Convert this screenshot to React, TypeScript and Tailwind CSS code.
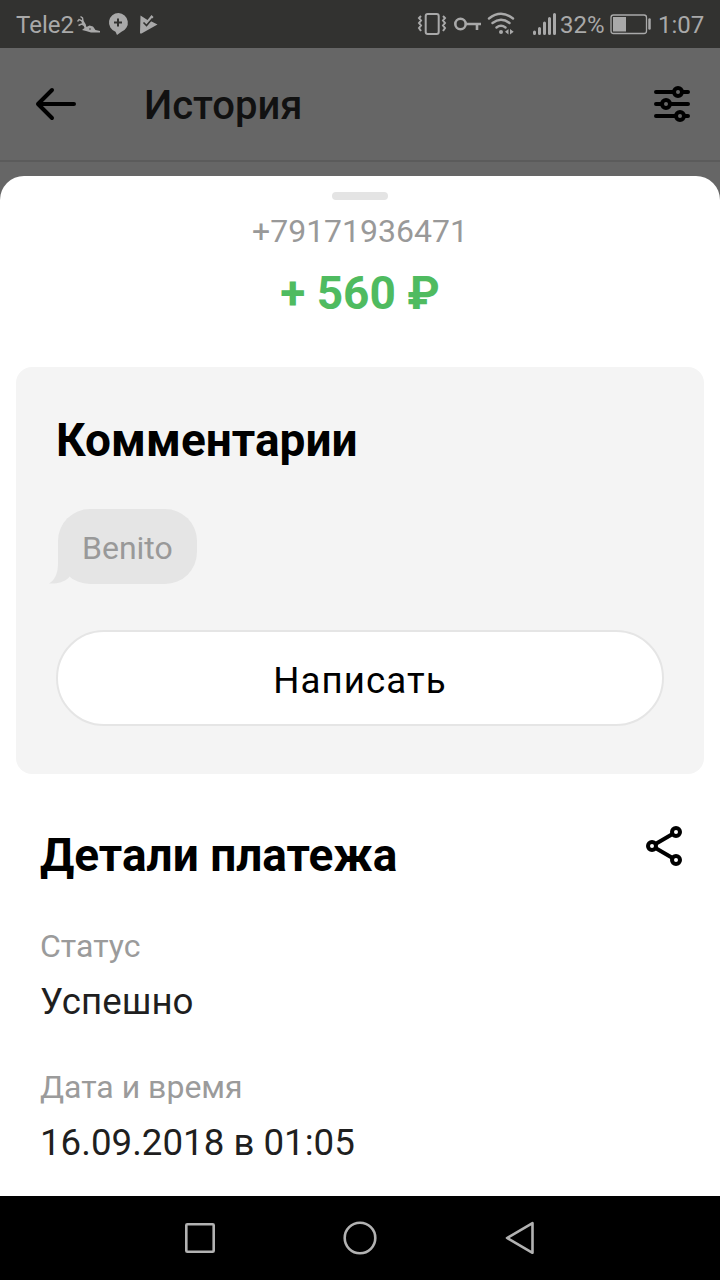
import type { ReactNode } from 'react';

const details = [
  { label: 'Статус', value: 'Успешно' },
  { label: 'Дата и время', value: '16.09.2018 в 01:05' },
];

function StatusBar() {
  return (
    <div className="flex h-12 items-center bg-[#323230] pl-4 text-2xl leading-none text-[#a9a9a9]">
      <span className="w-[61px] pt-0.5">Tele2</span>
      <svg width="84" height="48" viewBox="77 0 84 48" fill="currentColor">
        {/* carrier mascot */}
        <path
          d="M77.500 21.500l1.500-2 2.500 1 2 4M80.500 16.500l2 1.500.5 3 2 3.500M78.500 25.500l3-1.500 3.500 1.500"
          fill="none"
          stroke="currentColor"
          strokeWidth="1.400"
        />
        <path d="M82.500 23l3 1 1 3 3-1.500 3.500 1 2.500 3.500 4.500 1v1.500H91l-5-1.500-4-1 2.500-2z" />
        <circle cx="90" cy="29" r="0.800" fill="#323230" />
        <path d="M118.500 13a9.700 9.700 0 0 1 3 18.800L117 35l-1.500-3.300A9.600 9.600 0 0 1 118.500 13z" />
        <path d="M118 18.500v8M114 22.500h8" stroke="#323230" strokeWidth="2" />
        <path d="M140.500 15.500l7 4.500 4-5 2 2-3 4 7 3.500-16 9c-.8.4-1.500 0-1.500-1z" />
        <path d="M143.500 22.500l3 3 6-7" fill="none" stroke="#323230" strokeWidth="1.600" />
      </svg>
      <svg className="ml-auto" width="143" height="48" viewBox="417 0 143 48" fill="none" stroke="currentColor" strokeWidth="2">
        {/* vibrate */}
        <rect x="425.700" y="14" width="13" height="20" rx="2" />
        <path d="M421 16l-2 2 2 2.500-2 2.500 2 2.500-2 2.500 2 3M443 16l2 2-2 2.500 2 2.500-2 2.500 2 2.500-2 3" />
        {/* vpn key */}
        <circle cx="460.500" cy="24" r="5.200" strokeWidth="2.600" />
        <path d="M466 24h15M477 24v6" strokeWidth="2.600" />
        {/* wifi */}
        <path d="M489 18.500q12-9.500 24 0M492.500 23q8.500-6.500 17 0M496.500 27.500q4.500-3.500 9 0" strokeWidth="2.400" strokeLinecap="round" />
        <circle cx="501" cy="32" r="2" fill="currentColor" stroke="none" />
        <path d="M508.500 29v5.500l-3.500-2.700zM510 29v5.500l3.700-2.700z" fill="currentColor" stroke="none" />
        {/* signal */}
        <path
          d="M534.500 32v1.500M539.500 28.500v5M544.500 23v10.500M549.500 18.500v15M554.500 14.500v19"
          strokeWidth="3"
          strokeLinecap="round"
        />
      </svg>
      <span className="w-[50px] pt-0.5">32%</span>
      <svg width="48" height="48" viewBox="610 0 48 48" fill="none" stroke="currentColor">
        <rect x="611" y="15" width="35.500" height="18.500" rx="2.500" strokeWidth="1.300" />
        <path d="M613 17h13v14.500h-13z" fill="currentColor" stroke="none" />
        <path d="M649.500 19.500v9" strokeWidth="2.500" strokeLinecap="round" />
      </svg>
      <span className="w-[62px] pt-0.5">1:07</span>
    </div>
  );
}

function Header() {
  return (
    <header className="flex h-[114px] items-center border-b-2 border-[#5b5b5b] pr-7 pl-8">
      <svg width="48" height="48" viewBox="32 80 48 48" fill="none" stroke="#000" strokeWidth="4" strokeLinecap="round" strokeLinejoin="round">
        <path d="M74 104H38M52 90L38 104L52 118" />
      </svg>
      <h1 className="ml-16 pt-1 text-[40px] leading-[48px] font-medium text-[#111]">История</h1>
      <svg className="ml-auto" width="40" height="48" viewBox="652 80 40 48" fill="#666" stroke="#000" strokeWidth="4" strokeLinecap="round">
        <path d="M656 92h32M656 104h32M656 116h32" />
        <circle cx="678" cy="92" r="4" />
        <circle cx="666" cy="104" r="4" />
        <circle cx="680" cy="116" r="4" />
      </svg>
    </header>
  );
}

function Heading({ children }: { children: ReactNode }) {
  return <h2 className="text-[46px] leading-[56px] font-bold text-black">{children}</h2>;
}

function Comments() {
  return (
    <section className="mx-4 mt-[46px] h-[407px] rounded-2xl bg-[#f4f4f4] px-10 pt-[45px]">
      <Heading>Комментарии</Heading>
      <div className="relative mt-[41px] ml-0.5 flex h-[75px] w-[139px] items-center rounded-[32px] bg-[#e5e5e5] pt-0.5 pl-6 text-[32px] text-[#999]">
        <svg className="absolute bottom-0 -left-[9px]" width="24" height="34" viewBox="0 0 24 34" fill="#e5e5e5">
          <path d="M9 0v13C9 23 6 30 0 33.500C8 34 15 32 19.500 28L24 20V0z" />
        </svg>
        <span className="relative">Benito</span>
      </div>
      <button className="mt-[46px] block h-24 w-full rounded-full border-2 border-[#e5e5e5] bg-white pt-1.5 text-[36.7px] tracking-[1.1px] text-black">
        Написать
      </button>
    </section>
  );
}

function NavBar() {
  return (
    <nav className="flex h-[84px] shrink-0 items-center justify-center gap-[120px] bg-black">
      <svg width="40" height="40" viewBox="0 0 40 40" fill="none" stroke="#b2b2b2" strokeWidth="2.600">
        <rect x="6.300" y="6.300" width="27.400" height="27.400" rx="1" />
      </svg>
      <svg width="40" height="40" viewBox="0 0 40 40" fill="none" stroke="#b2b2b2" strokeWidth="2.600">
        <circle cx="20" cy="20" r="15.300" />
      </svg>
      <svg width="40" height="40" viewBox="0 0 40 40" fill="none" stroke="#b2b2b2" strokeWidth="2.600" strokeLinejoin="round">
        <path d="M32.500 5.200v29.600L7 20z" />
      </svg>
    </nav>
  );
}

export default function App() {
  return (
    <div className="flex h-[1280px] w-[720px] flex-col overflow-hidden bg-[#666] font-['Roboto',sans-serif]">
      <StatusBar />
      <Header />
      <main className="mt-3.5 flex-1 rounded-t-[24px] bg-white pt-4">
        <div className="mx-auto h-2 w-14 rounded-full bg-[#e4e4e4]" />
        <div className="mt-[11px] text-center text-[32px] leading-10 text-[#999]">+79171936471</div>
        <div className="mt-3.5 text-center text-[46px] leading-[56px] font-bold text-[#4fbb60]">+ 560 ₽</div>

        <Comments />

        <section className="px-10 pt-[53px]">
          <div className="flex justify-between">
            <Heading>Детали платежа</Heading>
            <svg className="-mt-[7px] -mr-1" width="40" height="52" viewBox="644 820 40 52" fill="#fff" stroke="#000" strokeWidth="4">
              <path d="M676 832L652 846L676 860" />
              <circle cx="676" cy="832" r="4" />
              <circle cx="652" cy="846" r="4" />
              <circle cx="676" cy="860" r="4" />
            </svg>
          </div>
          <dl className="mt-[43px] flex flex-col gap-[43px]">
            {details.map((item) => (
              <div key={item.label}>
                <dt className="text-[32px] leading-10 text-[#9b9b9b]">{item.label}</dt>
                <dd className="mt-[13px] text-[36.7px] leading-[45px] text-[#1f1f1f]">{item.value}</dd>
              </div>
            ))}
          </dl>
        </section>
      </main>
      <NavBar />
    </div>
  );
}
